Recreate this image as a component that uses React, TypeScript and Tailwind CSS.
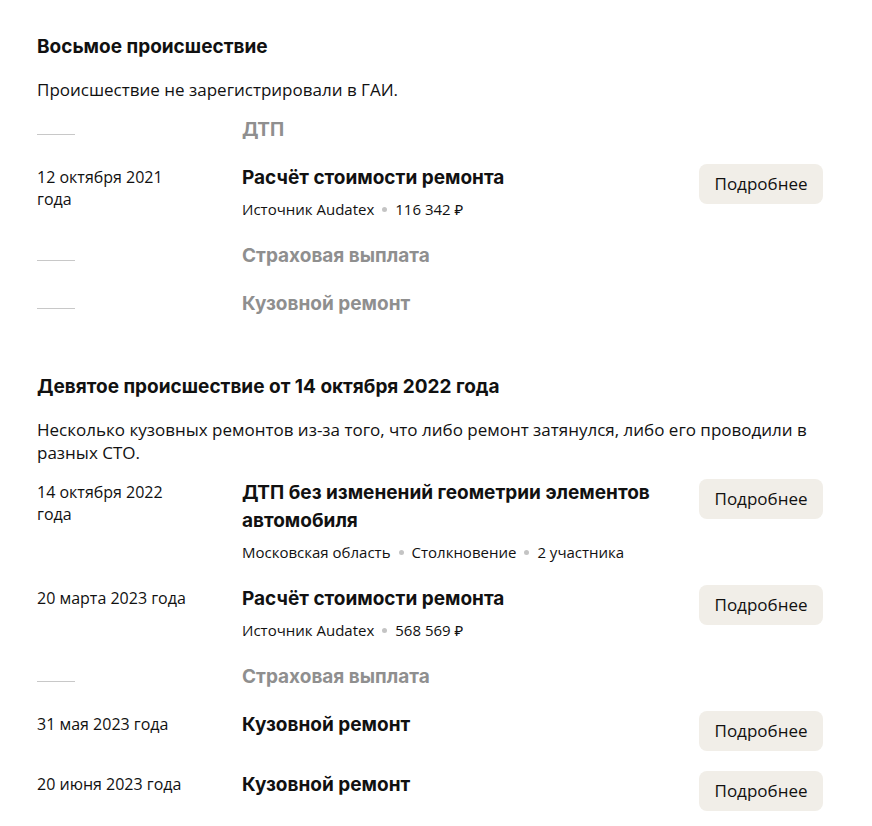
import React from 'react';

type Row = {
  date?: string;
  title: string;
  muted?: boolean;
  meta?: string[];
  button?: boolean;
};

const sections: { heading: string; text: string; rows: Row[] }[] = [
  {
    heading: 'Восьмое происшествие',
    text: 'Происшествие не зарегистрировали в ГАИ.',
    rows: [
      { title: 'ДТП', muted: true },
      {
        date: '12 октября 2021 года',
        title: 'Расчёт стоимости ремонта',
        meta: ['Источник Audatex', '116 342 ₽'],
        button: true,
      },
      { title: 'Страховая выплата', muted: true },
      { title: 'Кузовной ремонт', muted: true },
    ],
  },
  {
    heading: 'Девятое происшествие от 14 октября 2022 года',
    text: 'Несколько кузовных ремонтов из-за того, что либо ремонт затянулся, либо его проводили в разных СТО.',
    rows: [
      {
        date: '14 октября 2022 года',
        title: 'ДТП без изменений геометрии элементов автомобиля',
        meta: ['Московская область', 'Столкновение', '2 участника'],
        button: true,
      },
      {
        date: '20 марта 2023 года',
        title: 'Расчёт стоимости ремонта',
        meta: ['Источник Audatex', '568 569 ₽'],
        button: true,
      },
      { title: 'Страховая выплата', muted: true },
      { date: '31 мая 2023 года', title: 'Кузовной ремонт', button: true },
      { date: '20 июня 2023 года', title: 'Кузовной ремонт', button: true },
    ],
  },
];

const headFont = { fontFamily: 'Inter, "Noto Sans", sans-serif' };

function HistoryRow({ row }: { row: Row }) {
  return (
    <div className="flex items-start">
      <div className="w-[205px] shrink-0 pt-[2px]">
        {row.date ? (
          <div className="max-w-[155px] text-[16px] leading-[22px] text-[#111]">{row.date}</div>
        ) : (
          <div className="mt-[16px] h-px w-[38px] bg-[#c8c8c8]" />
        )}
      </div>
      <div className="min-w-0 flex-1 pr-5">
        <div
          className={`text-[19px] font-bold leading-7 ${row.muted ? 'text-[#8f8f8f]' : 'text-[#111]'}`}
          style={headFont}
        >
          {row.title}
        </div>
        {row.meta && (
          <div className="mt-[6px] mb-[2px] flex items-center text-[15px] leading-[22px] text-[#111]">
            {row.meta.map((m, i) => (
              <React.Fragment key={i}>
                {i > 0 && <span className="mx-2 h-[5px] w-[5px] rounded-full bg-[#c4c4c4]" />}
                <span>{m}</span>
              </React.Fragment>
            ))}
          </div>
        )}
      </div>
      {row.button && (
        <button className="h-10 w-[124px] shrink-0 rounded-lg bg-[#f1eee8] text-[17px] text-[#111]">
          Подробнее
        </button>
      )}
    </div>
  );
}

export default function App() {
  return (
    <div
      className="min-h-screen bg-white pl-[37px] pr-[49px] pt-[35px] pb-6"
      style={{ fontFamily: '"Open Sans", "Noto Sans", sans-serif' }}
    >
      {sections.map((s, i) => (
        <section key={i} className={i > 0 ? 'mt-[57px]' : ''}>
          <h2 className="text-[19px] font-bold leading-6 text-[#111]" style={headFont}>
            {s.heading}
          </h2>
          <p className="mt-[19px] text-[17px] leading-[23px] text-[#111]">{s.text}</p>
          <div className="mt-[15px] flex flex-col gap-5">
            {s.rows.map((r, j) => (
              <HistoryRow key={j} row={r} />
            ))}
          </div>
        </section>
      ))}
    </div>
  );
}
